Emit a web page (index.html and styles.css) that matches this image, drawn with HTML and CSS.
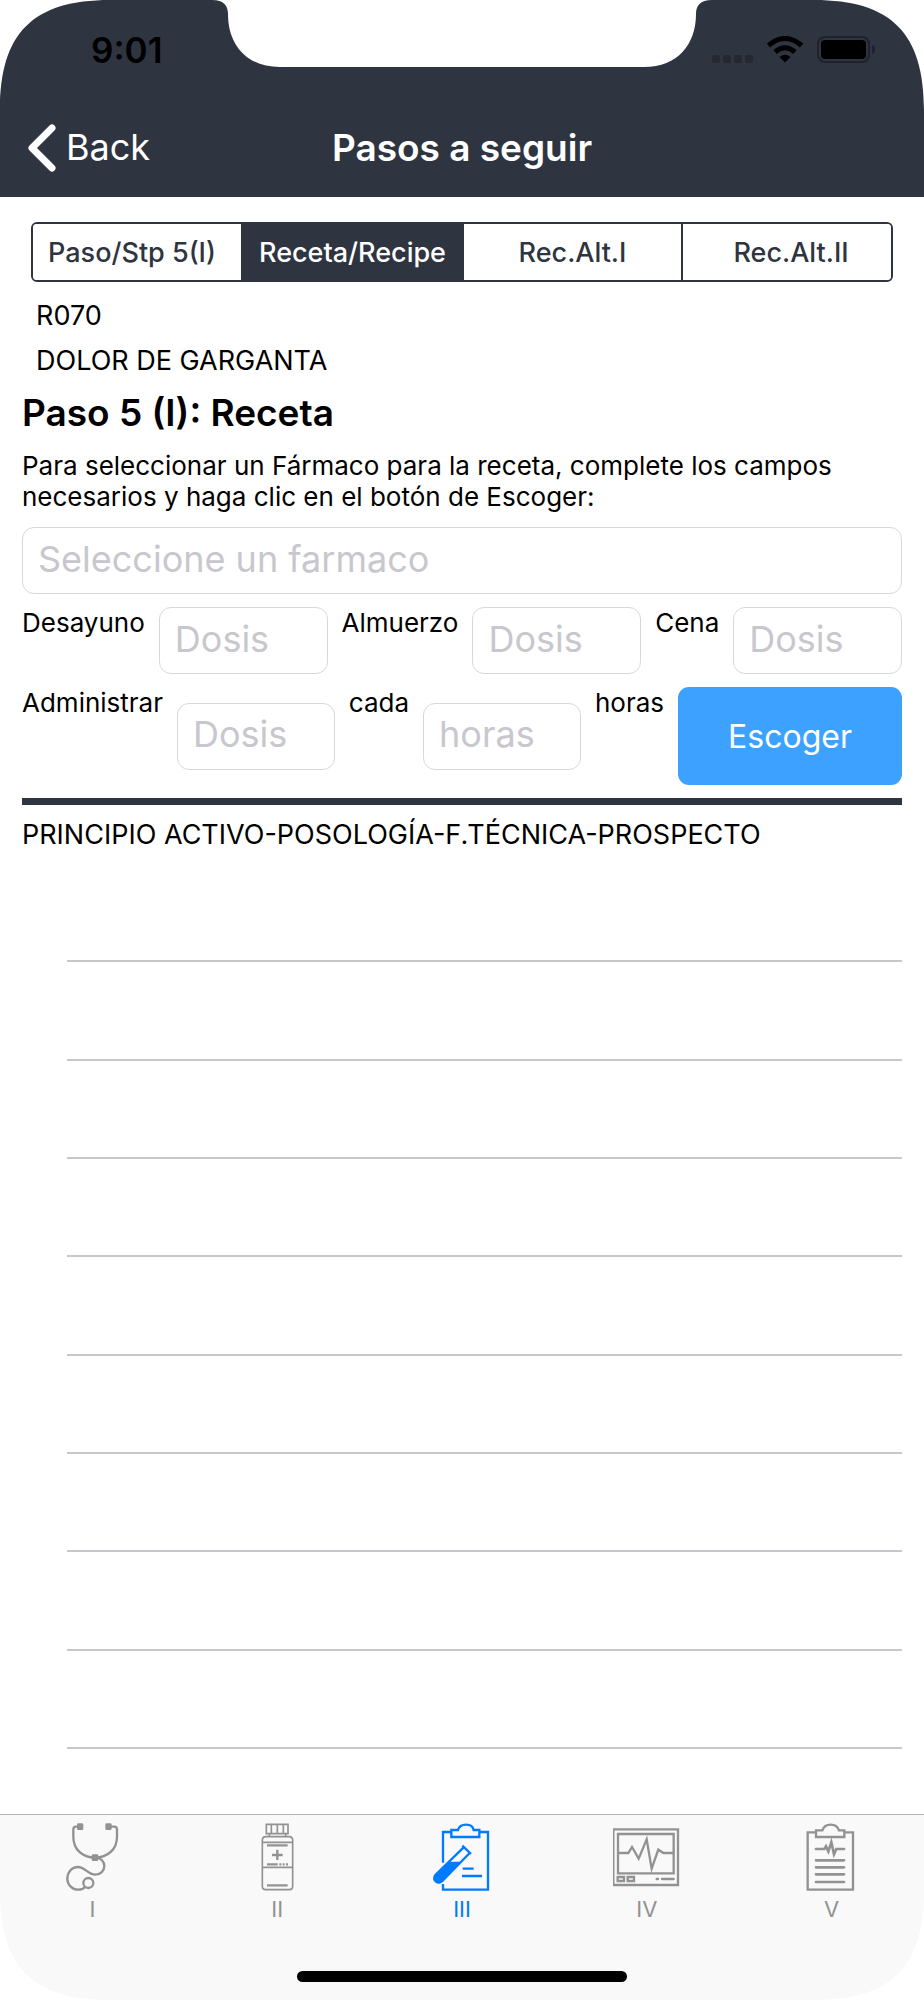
FILE: index.html
```html
<!DOCTYPE html>
<html lang="es">
<head>
<meta charset="utf-8">
<meta name="viewport" content="width=device-width, initial-scale=1">
<title>Pasos a seguir</title>
<link rel="stylesheet" href="styles.css">
</head>
<body>
<div class="screen">
  <header class="header">
    <svg class="corner corner-left" viewBox="0 0 110 110" aria-hidden="true"><path d="M0 0H110C33 0 0 33 0 110Z"/></svg>
    <svg class="corner corner-right" viewBox="0 0 110 110" aria-hidden="true"><path d="M0 0H110C33 0 0 33 0 110Z"/></svg>
    <svg class="notch" viewBox="0 0 500 67" aria-hidden="true"><path d="M0 0C12 0 16 6 16 14C16 44 34 67 68 67H432C466 67 484 44 484 14C484 6 488 0 500 0Z"/></svg>
    <div class="status">
      <span class="time">9:01</span>
      <svg class="status-icons" viewBox="0 0 166 28" aria-hidden="true">
        <g fill="#252831"><rect x="0" y="19" width="8" height="8" rx="2"/><rect x="11" y="19" width="8" height="8" rx="2"/><rect x="22" y="19" width="8" height="8" rx="2"/><rect x="33" y="19" width="8" height="8" rx="2"/></g>
        <g fill="none" stroke="#000" stroke-width="5"><path d="M56.500 9.500Q73 -4.500 89.500 9.500"/><path d="M63 16Q73 7.500 83 16"/></g>
        <path d="M67.500 21Q73 16.500 78.500 21L73 26.500Z"/>
        <rect x="106" y="1" width="51" height="25" rx="7" fill="none" stroke="#1e222b" stroke-width="2"/>
        <rect x="109" y="4" width="45" height="19" rx="4"/>
        <path d="M160 9Q163 10 163 13.500T160 18Z" fill="#1e222b"/>
      </svg>
    </div>
    <div class="navbar">
      <a class="back" href="#">
        <svg class="chevron" viewBox="0 0 28 48" aria-hidden="true"><path d="M24 4L4 24L24 44"/></svg>
        Back
      </a>
      <h1 class="title">Pasos a seguir</h1>
    </div>
  </header>

  <main class="content">
    <div class="segments">
      <button class="segment" type="button">Paso/Stp 5(I)</button>
      <button class="segment active" type="button" aria-pressed="true">Receta/Recipe</button>
      <button class="segment" type="button">Rec.Alt.I</button>
      <button class="segment" type="button">Rec.Alt.II</button>
    </div>

    <div class="diagnosis">
      <p class="diagnosis-line">R070</p>
      <p class="diagnosis-line">DOLOR DE GARGANTA</p>
    </div>
    <h2 class="heading">Paso 5 (I): Receta</h2>
    <p class="intro">Para seleccionar un Fármaco para la receta, complete los campos necesarios y haga clic en el botón de Escoger:</p>

    <form class="form">
      <input class="field" type="text" placeholder="Seleccione un farmaco" aria-label="Seleccione un farmaco">
      <div class="row">
        <label class="label" for="desayuno">Desayuno</label>
        <input class="field" id="desayuno" type="text" placeholder="Dosis">
        <label class="label" for="almuerzo">Almuerzo</label>
        <input class="field" id="almuerzo" type="text" placeholder="Dosis">
        <label class="label" for="cena">Cena</label>
        <input class="field" id="cena" type="text" placeholder="Dosis">
      </div>
      <div class="row">
        <label class="label" for="administrar">Administrar</label>
        <input class="field" id="administrar" type="text" placeholder="Dosis">
        <label class="label" for="cada">cada</label>
        <input class="field" id="cada" type="text" placeholder="horas">
        <span class="label">horas</span>
        <button class="choose" type="button">Escoger</button>
      </div>
    </form>

    <h3 class="list-title">PRINCIPIO ACTIVO-POSOLOGÍA-F.TÉCNICA-PROSPECTO</h3>
    <ul class="list">
      <li></li><li></li><li></li><li></li><li></li><li></li><li></li><li></li><li></li>
    </ul>
  </main>

  <footer class="footer">
    <svg class="corner corner-bottom-left" viewBox="0 0 110 110" aria-hidden="true"><path d="M0 0H110C33 0 0 33 0 110Z"/></svg>
    <svg class="corner corner-bottom-right" viewBox="0 0 110 110" aria-hidden="true"><path d="M0 0H110C33 0 0 33 0 110Z"/></svg>
    <nav class="tabs">
      <a class="tab" href="#">
        <svg class="icon" viewBox="175 69 204 204" aria-hidden="true">
          <g class="thick"><path d="M238 80H229Q221 80 221 88V110C221 148 248 173 286 173S352 148 352 110V88Q352 80 344 80H330"/><path d="M288 173C304 173 314 185 314 198C314 212 302 224 287 224C263 224 257 201 235 201C216 201 203 217 203 236C203 254 217 269 235 269C244 269 252 266 257 260"/><circle cx="266" cy="249" r="15"/></g>
          <g class="solid"><rect x="232" y="70" width="19" height="20" rx="4"/><rect x="317" y="70" width="19" height="20" rx="4"/><rect x="276" y="163" width="20" height="20" rx="4"/></g>
        </svg>
        I
      </a>
      <a class="tab" href="#">
        <svg class="icon" viewBox="730 69 204 204" aria-hidden="true">
          <path d="M800 73H865V101H800ZM815 73V101M833 73V101M851 73V101M809 101V110M858 101V110M798 110H868Q879 110 879 121V259Q879 269 869 269H798Q788 269 788 259V121Q788 110 798 110ZM788 127H879M788 202H879"/>
          <path class="thick" d="M802 136H864M802 256H864M833 149V180M817 165H849M802 193H834M839 193H845M849 193H855M859 193H865"/>
        </svg>
        II
      </a>
      <a class="tab current" href="#" aria-current="page">
        <svg class="icon" viewBox="84 54 204 204" aria-hidden="true">
          <path class="thick" d="M129 173V81H154M240 81H264V254H129V237M154 75H174C177 65 186 59 198 59S219 65 221 75H238V96H154ZM188 191H221M186 213H246"/>
          <path class="thick" d="M187 122L213 147M191 127L106 210C99 217 103 226 108 230C114 235 122 233 127 228L209 144"/>
          <path class="solid" d="M147 170H183L127 228C122 235 114 235 108 230C103 226 99 217 106 210Z"/>
        </svg>
        III
      </a>
      <a class="tab" href="#">
        <svg class="icon" viewBox="159 69 204 204" aria-hidden="true">
          <g class="thick"><path d="M160 88H354V255H160ZM174 102H341V220H174ZM176 159H205L216 141L236 176L260 118L275 206L295 149L310 159H340"/><path d="M173 231H192V243H173ZM203 231H222V243H203ZM290 237H294M306 237H341" stroke-linecap="round"/></g>
        </svg>
        IV
      </a>
      <a class="tab" href="#">
        <svg class="icon" viewBox="714 69 204 204" aria-hidden="true">
          <path class="thick" d="M767 97H743V269H879V97H854M768 91H787C791 80 800 74 812 74S833 80 837 91H853V111H768Z"/>
          <path class="wide" d="M768 147H793L798 139L805 154L814 127L822 163L829 147H852M768 181H852M768 202H852M768 223H852M768 246H852"/>
        </svg>
        V
      </a>
    </nav>
    <div class="home-indicator"></div>
  </footer>
</div>
</body>
</html>
```
FILE: styles.css
```css
* {
  box-sizing: border-box;
}

body,
h1,
h2,
h3,
p,
ul {
  margin: 0;
}

body {
  background: #fff;
  color: #000;
  font: 27px/31px Inter, "Liberation Sans", sans-serif;
}

button,
input {
  font-family: inherit;
}

a {
  color: inherit;
  text-decoration: none;
}

.screen {
  display: flex;
  flex-direction: column;
  min-height: 100vh;
}

/* Header */
.header {
  position: relative;
  background: #2e3440;
  color: #fff;
}

.corner {
  position: absolute;
  width: 110px;
  height: 110px;
  fill: #fff;
}

.corner-left {
  top: 0;
  left: 0;
}

.corner-right {
  top: 0;
  right: 0;
  transform: scaleX(-1);
}

.corner-bottom-left {
  bottom: 0;
  left: 0;
  transform: scaleY(-1);
}

.corner-bottom-right {
  bottom: 0;
  right: 0;
  transform: scale(-1);
}

.notch {
  position: absolute;
  top: 0;
  left: 50%;
  width: 500px;
  height: 67px;
  transform: translateX(-50%);
  fill: #fff;
}

.status {
  display: flex;
  justify-content: space-between;
  align-items: center;
  height: 100px;
  padding: 0 46px 0 91px;
  color: #000;
}

.time {
  font-size: 35px;
  font-weight: 600;
}

.status-icons {
  width: 166px;
  height: 28px;
}

.navbar {
  display: grid;
  grid-template-columns: 1fr auto 1fr;
  align-items: center;
  height: 97px;
  padding: 0 28px 2px;
}

.back {
  display: flex;
  align-items: center;
  gap: 10px;
  font-size: 36px;
}

.chevron {
  width: 28px;
  height: 48px;
  fill: none;
  stroke: #fff;
  stroke-width: 7;
  stroke-linecap: round;
  stroke-linejoin: round;
}

.title {
  font-size: 37px;
  font-weight: 600;
}

/* Content */
.content {
  display: flex;
  flex: 1;
  flex-direction: column;
  padding: 25px 22px 65px;
}

.segments {
  display: grid;
  grid-template-columns: 208fr 221fr 219fr 210fr;
  height: 60px;
  margin: 0 9px;
  overflow: hidden;
  border: 2px solid #2e3440;
  border-radius: 6px;
}

.segment {
  min-width: 0;
  padding: 0;
  border: 0;
  background: #fff;
  color: #2e3440;
  font-size: 27px;
  font-weight: 500;
}

.segment:first-child {
  padding-right: 10px;
}

.segment:last-child {
  padding-left: 8px;
}

.segment + .segment {
  border-left: 2px solid #2e3440;
}

.segment.active {
  background: #2e3440;
  color: #fff;
}

.diagnosis {
  padding: 11px 14px 0;
}

.diagnosis-line {
  line-height: 45px;
}

.heading {
  font-size: 37px;
  font-weight: 600;
  line-height: 60px;
}

.intro {
  padding: 7px 0 15px;
  font-size: 26px;
}

.form {
  display: flex;
  flex-direction: column;
  gap: 13px;
  padding-bottom: 13px;
  border-bottom: 7px solid #2e3440;
}

.row {
  display: flex;
  align-items: center;
  gap: 14px;
}

.label {
  align-self: flex-start;
  font-size: 26px;
}

.field {
  flex: 1;
  width: 100%;
  min-width: 0;
  min-height: 67px;
  padding: 0 15px 4px;
  border: 1px solid #d8d8da;
  border-radius: 12px;
  background: #fff;
  color: #000;
  font-size: 36px;
}

.field::placeholder {
  color: #c7c7cd;
  opacity: 1;
}

.choose {
  width: 224px;
  height: 98px;
  border: 0;
  border-radius: 11px;
  background: #3da1ff;
  color: #fff;
  font-size: 32px;
}

.list-title {
  padding: 14px 0;
  font-size: 27px;
  font-weight: 400;
}

.list {
  display: flex;
  flex: 1;
  flex-direction: column;
  padding: 0 0 0 45px;
  list-style: none;
}

.list li {
  flex: 1;
  min-height: 44px;
  border-bottom: 2px solid #c8c7cc;
}

/* Tab bar */
.footer {
  position: relative;
  display: flex;
  flex-direction: column;
  justify-content: space-between;
  height: 186px;
  padding: 8px 0 18px;
  border-top: 1px solid #b2b2b2;
  background: #f9f9f9;
}

.tabs {
  display: grid;
  grid-template-columns: repeat(5, 1fr);
}

.tab {
  display: flex;
  flex-direction: column;
  align-items: center;
  gap: 3px;
  color: #929292;
  font-size: 22px;
}

.current {
  color: #007aff;
}

.icon {
  width: 68px;
  height: 68px;
  fill: none;
  stroke: currentColor;
  stroke-width: 5;
}

.thick {
  stroke-width: 7;
}

.wide {
  stroke-width: 8;
  stroke-linecap: round;
}

.solid {
  fill: currentColor;
  stroke: none;
}

.home-indicator {
  align-self: center;
  width: 330px;
  height: 11px;
  border-radius: 6px;
  background: #000;
}
```
